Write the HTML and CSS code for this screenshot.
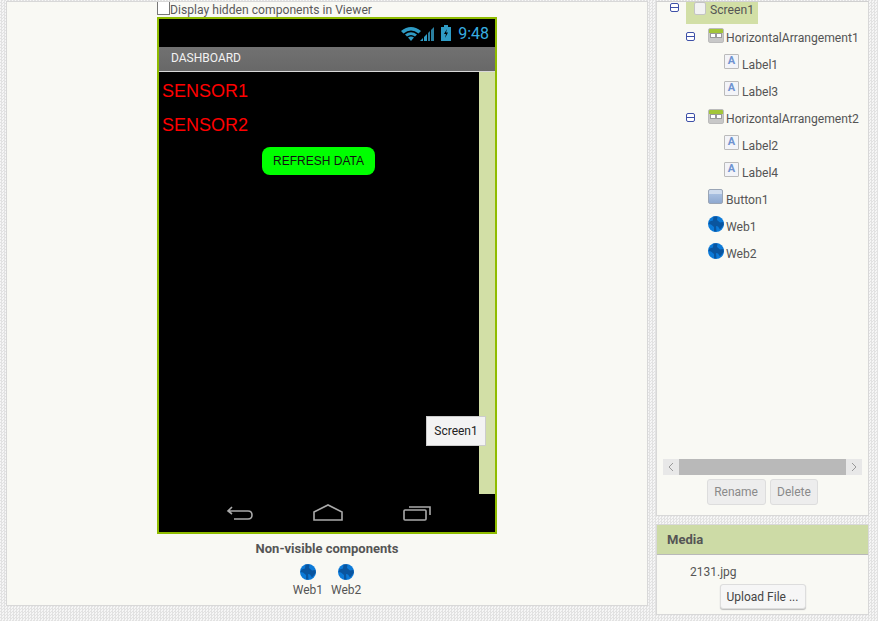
FILE: index.html
```html
<!DOCTYPE html>
<html>
<head>
    <title>Designer</title>
    <meta charset="UTF-8">
    <link rel="stylesheet" href="styles.css">
</head>
<body>
    <svg class="defs" width="0" height="0">
        <symbol id="globe" viewBox="0 0 16 16">
            <circle cx="8" cy="8" r="8" fill="#0c7ad8"/>
            <path d="M5.5 0.5 L9.5 0.5 L9 4 L12 6.5 L15.5 6 L15.8 9 L12 13.5 L10 10.5 L8 10 L8.5 15.5 L6 15.5 L6 11 L3 8.5 L0.5 8 L1.5 5.5 L5 4.5 Z" fill="#0a559f"/>
        </symbol>
    </svg>

    <div class="page">
        <div class="viewer panel">
            <div class="hidden-check">
                <span class="check"></span>
                <span>Display hidden components in Viewer</span>
            </div>

            <div class="phone">
                <div class="status">
                    <svg class="wifi" width="20" height="15" viewBox="0 0 20 15">
                        <path d="M0 5 Q10 -3 20 5 L17.5 7.5 Q10 1.5 2.5 7.5 Z" fill="#2f9bc4"/>
                        <path d="M4 8.5 Q10 4 16 8.5 L14 10.5 Q10 7.5 6 10.5 Z" fill="#2f9bc4"/>
                        <path d="M7 11.5 Q10 9.5 13 11.5 L10 15 Z" fill="#2f9bc4"/>
                    </svg>
                    <svg class="signal" width="15" height="15" viewBox="0 0 15 15">
                        <path d="M0 15 L3 12 L3 15 Z" fill="#2f9bc4"/>
                        <path d="M4 15 L4 11 L7 8 L7 15 Z" fill="#2f9bc4"/>
                        <path d="M8 15 L8 7 L10 5 L10 15 Z" fill="#2a7fa0"/>
                        <path d="M11 15 L11 4 L14 1 L14 15 Z" fill="#2a7fa0"/>
                    </svg>
                    <svg class="battery" width="10" height="16" viewBox="0 0 10 16">
                        <path d="M3 0 H7 V2 H10 V16 H0 V2 H3 Z" fill="#2f9bc4"/>
                        <path d="M6 4 L3 9 H5 L4 13 L7 7.5 H5 Z" fill="#000"/>
                    </svg>
                    <span class="clock">9:48</span>
                </div>
                <div class="titlebar">DASHBOARD</div>
                <div class="screen">
                    <div class="content">
                        <div class="sensor">SENSOR1</div>
                        <div class="sensor">SENSOR2</div>
                        <button type="button" class="refresh">REFRESH DATA</button>
                    </div>
                    <div class="strip"></div>
                    <div class="tooltip">Screen1</div>
                </div>
                <div class="navbar">
                    <svg class="nav-back" width="28" height="18" viewBox="0 0 28 18">
                        <path d="M6 3 L2 7 L6 10 M2 7 H22 Q26 7 26 11 Q26 15 22 15 H8" fill="none" stroke="#aaa" stroke-width="1.6"/>
                    </svg>
                    <svg width="30" height="18" viewBox="0 0 30 18">
                        <path d="M1 8 L15 1 L29 8 V16 H1 Z" fill="none" stroke="#aaa" stroke-width="1.6"/>
                    </svg>
                    <svg width="28" height="18" viewBox="0 0 28 18">
                        <rect x="1" y="6" width="22" height="10" rx="1" fill="none" stroke="#aaa" stroke-width="1.6"/>
                        <path d="M6 3 H27 V11" fill="none" stroke="#aaa" stroke-width="1.6"/>
                    </svg>
                </div>
            </div>

            <div class="nonvisible-title">Non-visible components</div>
            <div class="nonvisible">
                <div class="nv-item"><svg width="16" height="16"><use href="#globe"/></svg><span>Web1</span></div>
                <div class="nv-item"><svg width="16" height="16"><use href="#globe"/></svg><span>Web2</span></div>
            </div>
        </div>

        <div class="side">
            <div class="tree-panel panel">
                <div class="tree">
                    <div class="row root">
                        <span class="expander"></span>
                        <span class="selected"><span class="ico-screen"></span>Screen1</span>
                    </div>
                    <div class="row lvl1">
                        <span class="expander"></span>
                        <span class="ico-arr"><i></i><i></i></span>HorizontalArrangement1
                    </div>
                    <div class="row lvl2"><span class="ico-label">A</span>Label1</div>
                    <div class="row lvl2"><span class="ico-label">A</span>Label3</div>
                    <div class="row lvl1">
                        <span class="expander"></span>
                        <span class="ico-arr"><i></i><i></i></span>HorizontalArrangement2
                    </div>
                    <div class="row lvl2"><span class="ico-label">A</span>Label2</div>
                    <div class="row lvl2"><span class="ico-label">A</span>Label4</div>
                    <div class="row lvl3"><span class="ico-button"></span>Button1</div>
                    <div class="row lvl3"><svg class="ico-web" width="16" height="16"><use href="#globe"/></svg>Web1</div>
                    <div class="row lvl3"><svg class="ico-web" width="16" height="16"><use href="#globe"/></svg>Web2</div>
                </div>
                <div class="hscroll">
                    <span class="arrow"><svg width="6" height="10" viewBox="0 0 6 10"><path d="M5 1 L1 5 L5 9" fill="none" stroke="#999" stroke-width="1"/></svg></span>
                    <span class="thumb"></span>
                    <span class="arrow"><svg width="6" height="10" viewBox="0 0 6 10"><path d="M1 1 L5 5 L1 9" fill="none" stroke="#999" stroke-width="1"/></svg></span>
                </div>
                <div class="tree-actions">
                    <button type="button" class="btn-off">Rename</button>
                    <button type="button" class="btn-off">Delete</button>
                </div>
            </div>

            <div class="media panel">
                <div class="media-head">Media</div>
                <div class="media-file">2131.jpg</div>
                <div class="media-actions">
                    <button type="button" class="btn-upload">Upload File ...</button>
                </div>
            </div>
        </div>
    </div>
</body>
</html>
```

FILE: styles.css
```css
html, body {
    margin: 0;
    height: 621px;
    overflow: hidden;
}

body {
    font-family: Roboto, "Liberation Sans", sans-serif;
    font-size: 12px;
    color: #555;
    background-color: #f3f3f3;
    background-image: repeating-conic-gradient(#e2e2e2 0 25%, #f6f6f6 0 50%);
    background-size: 3px 3px;
}

.defs {
    display: block;
}

.page {
    display: flex;
    align-items: flex-start;
    gap: 8px;
    padding: 1px 0 0 6px;
}

.panel {
    background-color: #f9f9f4;
    border: 1px solid #d8d8d8;
    box-sizing: border-box;
}

.viewer {
    width: 642px;
    height: 605px;
    display: flex;
    flex-direction: column;
    padding-left: 150px;
}

.hidden-check {
    display: flex;
    height: 15px;
    line-height: 17px;
    font-size: 12.15px;
    color: #5a5a5a;
}

.check {
    width: 11px;
    height: 12px;
    background: #fff;
    border: 1px solid #777;
    border-top: none;
}

.phone {
    width: 336px;
    border: 2px solid #8fbc00;
    background: #000;
    display: flex;
    flex-direction: column;
}

.status {
    height: 28px;
    display: flex;
    align-items: center;
    justify-content: flex-end;
    padding-right: 6px;
}

.wifi {
    margin-right: -1px;
}

.signal {
    margin-right: 6px;
}

.battery {
    margin-right: 7px;
}

.clock {
    color: #38aee0;
    font-size: 16px;
}

.titlebar {
    height: 24px;
    line-height: 23px;
    padding-left: 12px;
    font-size: 12px;
    color: #f2f2f2;
    background: linear-gradient(#717171, #686868);
    border-bottom: 1px solid #d8d8d8;
}

.screen {
    position: relative;
    height: 422px;
    display: flex;
}

.content {
    flex: 1;
    padding-top: 1px;
}

.strip {
    width: 16px;
    background: #d2dfa6;
}

.sensor {
    height: 34px;
    line-height: 37px;
    padding-left: 3px;
    font-family: "Liberation Sans", Arial, sans-serif;
    font-size: 18px;
    color: #f00;
}

.refresh {
    display: block;
    width: 113px;
    height: 28px;
    margin: 6px 0 0 103px;
    padding: 0;
    border: none;
    border-radius: 8px;
    background: #0f0;
    color: #111;
    font-family: "Liberation Sans", Arial, sans-serif;
    font-size: 12px;
}

.tooltip {
    position: absolute;
    left: 267px;
    top: 344px;
    width: 60px;
    height: 30px;
    line-height: 28px;
    text-align: center;
    box-sizing: border-box;
    background: #f3f3f3;
    border: 1px solid #ccc;
    color: #222;
}

.navbar {
    height: 38px;
    display: flex;
    align-items: center;
    justify-content: center;
    gap: 60px;
    padding-left: 2px;
}

.nav-back {
    margin: 0 -1px 0 1px;
}

.nonvisible-title {
    width: 340px;
    margin-top: 7px;
    text-align: center;
    font-weight: 700;
    font-size: 13px;
    line-height: 15px;
}

.nonvisible {
    width: 340px;
    margin-top: 8px;
    display: flex;
    justify-content: center;
    gap: 8px;
}

.nv-item {
    display: flex;
    flex-direction: column;
    align-items: center;
    gap: 3px;
    line-height: 15px;
}

.side {
    display: flex;
    flex-direction: column;
    gap: 8px;
    width: 213px;
}

.tree-panel {
    height: 515px;
    border-top-color: #d0d0d0;
    display: flex;
    flex-direction: column;
}

.tree {
    height: 457px;
    padding-left: 13px;
    font-size: 12.15px;
}

.row {
    height: 27px;
    display: flex;
    align-items: center;
    white-space: nowrap;
}

.root {
    height: 22px;
    align-items: flex-start;
}

.expander {
    width: 7px;
    height: 7px;
    border: 1px solid #3f51a8;
    border-radius: 2px;
    background: linear-gradient(to bottom, transparent 3px, #3f51a8 3px, #3f51a8 4px, transparent 4px), #fff;
    flex: none;
}

.root .expander {
    margin-top: 1px;
}

.selected {
    display: flex;
    align-items: flex-start;
    height: 22px;
    width: 72px;
    margin-left: 7px;
    padding-left: 8px;
    box-sizing: border-box;
    line-height: 17px;
    background: #d2dfa6;
}

.ico-screen {
    width: 10px;
    height: 11px;
    margin: 0 4px 0 0;
    background: #f2f2f2;
    border: 1px solid #c4c4c4;
    border-radius: 2px;
}

.lvl1 {
    padding-left: 16px;
}

.lvl1 .expander {
    margin-top: -3px;
}

.lvl2 {
    padding-left: 54px;
}

.lvl3 {
    padding-left: 38px;
}

.ico-arr {
    display: flex;
    justify-content: center;
    width: 16px;
    height: 15px;
    margin: -5px 2px 0 13px;
    padding-top: 4px;
    box-sizing: border-box;
    border-radius: 2px;
    background: linear-gradient(#a3c639 0 4px, #c8c8c8 4px);
    border: 1px solid #bbb;
}

.ico-arr i {
    width: 6px;
    height: 5px;
    background: #fff;
    border: 1px solid #999;
    box-sizing: border-box;
}

.ico-label {
    width: 15px;
    height: 15px;
    margin: -6px 3px 0 0;
    box-sizing: border-box;
    border: 1px solid #bbb;
    border-radius: 1px;
    background: #f3f4f8;
    color: #6f93d0;
    font-weight: 700;
    font-size: 11px;
    line-height: 12px;
    text-align: center;
}

.ico-button {
    width: 15px;
    height: 15px;
    margin: -7px 3px 0 0;
    box-sizing: border-box;
    border: 1px solid #9aa5b5;
    border-radius: 2px;
    background: linear-gradient(#cfdcee 0 4px, #a7bfe0 4px, #8fa9d0);
}

.ico-web {
    margin: -6px 2px 0 0;
}

.hscroll {
    display: flex;
    height: 16px;
    margin: 0 6px;
    background: #e8e8e8;
}

.arrow {
    width: 16px;
    display: flex;
    align-items: center;
    justify-content: center;
}

.thumb {
    flex: 1;
    background: #b9b9b9;
}

.tree-actions {
    display: flex;
    justify-content: center;
    gap: 4px;
    margin-top: 4px;
}

.btn-off {
    height: 26px;
    padding: 0 6.5px;
    border: 1px solid #ddd;
    border-radius: 3px;
    background: #ededed;
    color: #8a8a8a;
    font-family: Roboto, sans-serif;
    font-size: 12px;
}

.media {
    height: 91px;
}

.media-head {
    height: 30px;
    line-height: 29px;
    padding-left: 10px;
    box-sizing: border-box;
    background: #cddba6;
    border-bottom: 1px solid #b9b9b9;
    font-weight: 700;
    font-size: 13px;
}

.media-file {
    margin: 10px 0 0 33px;
    line-height: 15px;
}

.media-actions {
    display: flex;
    justify-content: center;
    margin-top: 4px;
}

.btn-upload {
    width: 86px;
    height: 25px;
    padding: 0;
    border: 1px solid #ddd;
    border-radius: 3px;
    background: #f6f6f6;
    box-shadow: 0 1px 1px #bbb;
    color: #444;
    font-family: Roboto, sans-serif;
    font-size: 12px;
}
```
